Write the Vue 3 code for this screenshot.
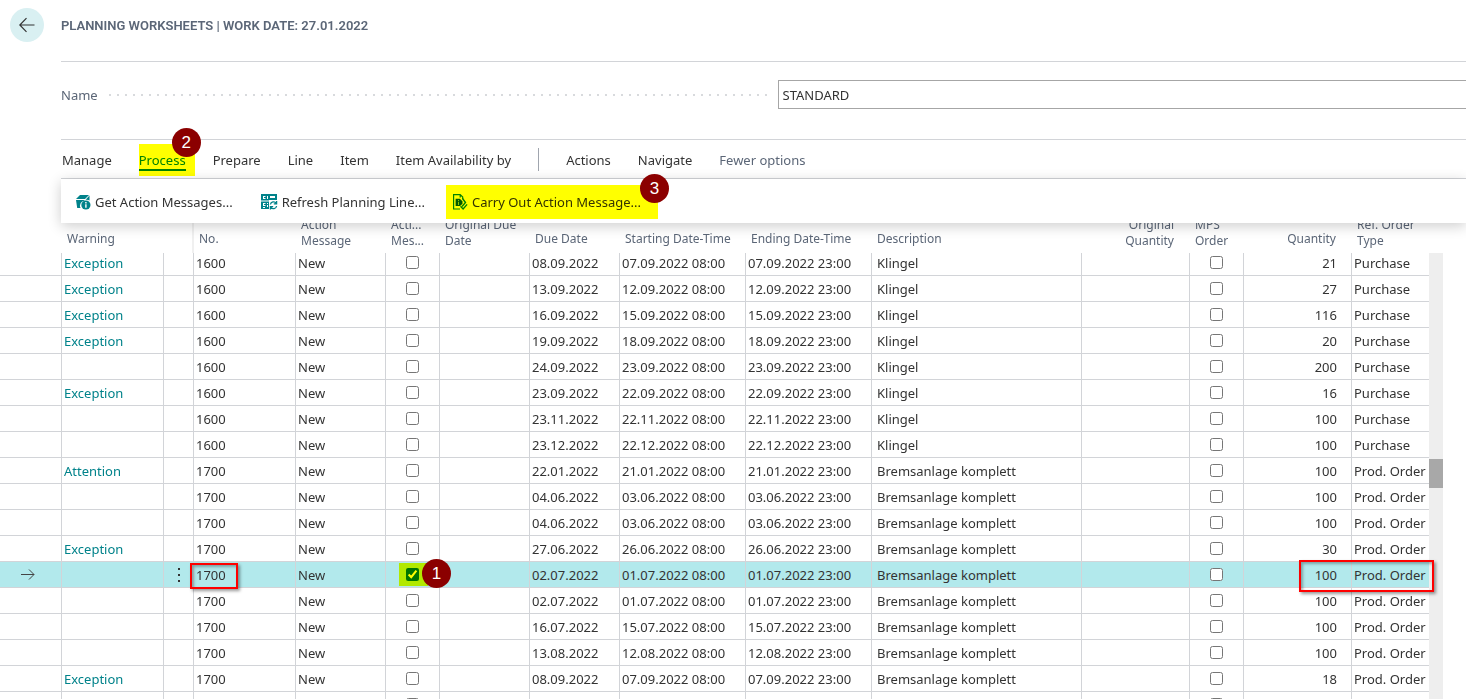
<script setup>
const columns = [
  { key: 'marker', label: [] },
  { key: 'warning', label: ['Warning'] },
  { key: 'more', label: [] },
  { key: 'no', label: ['No.'] },
  { key: 'message', label: ['Action', 'Message'] },
  { key: 'accept', label: ['Acti...', 'Mes...'] },
  { key: 'orig-due', label: ['Original Due', 'Date'] },
  { key: 'due', label: ['Due Date'] },
  { key: 'start', label: ['Starting Date-Time'] },
  { key: 'end', label: ['Ending Date-Time'] },
  { key: 'desc', label: ['Description'] },
  { key: 'orig-qty', label: ['Original', 'Quantity'] },
  { key: 'mps', label: ['MPS', 'Order'] },
  { key: 'qty', label: ['Quantity'] },
  { key: 'type', label: ['Ref. Order', 'Type'] },
]

const source = [
  ['Exception', '1600', '08.09.2022', '07.09.2022', 21],
  ['Exception', '1600', '13.09.2022', '12.09.2022', 27],
  ['Exception', '1600', '16.09.2022', '15.09.2022', 116],
  ['Exception', '1600', '19.09.2022', '18.09.2022', 20],
  ['', '1600', '24.09.2022', '23.09.2022', 200],
  ['Exception', '1600', '23.09.2022', '22.09.2022', 16],
  ['', '1600', '23.11.2022', '22.11.2022', 100],
  ['', '1600', '23.12.2022', '22.12.2022', 100],
  ['Attention', '1700', '22.01.2022', '21.01.2022', 100],
  ['', '1700', '04.06.2022', '03.06.2022', 100],
  ['', '1700', '04.06.2022', '03.06.2022', 100],
  ['Exception', '1700', '27.06.2022', '26.06.2022', 30],
  ['', '1700', '02.07.2022', '01.07.2022', 100, true],
  ['', '1700', '02.07.2022', '01.07.2022', 100],
  ['', '1700', '16.07.2022', '15.07.2022', 100],
  ['', '1700', '13.08.2022', '12.08.2022', 100],
  ['Exception', '1700', '08.09.2022', '07.09.2022', 18],
  [],
]

const rows = source.map(([warning, no, due, day, qty, selected]) => ({
  warning,
  no,
  message: no ? 'New' : '',
  due,
  start: day ? `${day} 08:00` : '',
  end: day ? `${day} 23:00` : '',
  desc: !no ? '' : no === '1600' ? 'Klingel' : 'Bremsanlage komplett',
  qty,
  type: !no ? '' : no === '1600' ? 'Purchase' : 'Prod. Order',
  selected: Boolean(selected),
}))
</script>

<template>
  <div class="page">
    <header class="title-bar">
      <button class="back" aria-label="Back">
        <svg width="16" height="16" viewBox="0 0 16 16" fill="none" stroke="#333" stroke-width="1.2">
          <path d="M15.500 8H.8M7.500 1.200L.8 8l6.700 6.800" />
        </svg>
      </button>
      <h1>PLANNING WORKSHEETS | WORK DATE: 27.01.2022</h1>
    </header>

    <main>
      <div class="name-field">
        <label for="batch-name">Name</label>
        <span class="leader"></span>
        <input id="batch-name" type="text" value="STANDARD" />
      </div>

      <section class="ribbon">
        <nav class="menu">
          <button>Manage</button>
          <button class="active">
            Process
            <span class="marker-pen"></span>
            <span class="badge">2</span>
          </button>
          <button>Prepare</button>
          <button>Line</button>
          <button>Item</button>
          <button>Item Availability by</button>
          <span class="divider"></span>
          <button>Actions</button>
          <button>Navigate</button>
          <button class="muted">Fewer options</button>
        </nav>

        <div class="panel">
          <button class="action">
            <svg width="16" height="16" viewBox="0 0 16 16">
              <path fill="#00828a" d="M1 5l4-4h9l-4 4zM1 6h8.500v.5A5.300 5.300 0 0 0 5.500 14H2.200zM10.800 5.400L14.500 1.600v4.800a6 6 0 0 0-3.700-.6z" />
              <circle cx="10.900" cy="11" r="4.600" fill="#00828a" />
              <path stroke="#fff" stroke-width="1.400" d="M10.900 8v1.400M10.900 10.200v3.600" />
            </svg>
            Get Action Messages...
          </button>
          <button class="action">
            <svg width="17" height="16" viewBox="0 0 17 16">
              <path fill="#00828a" d="M0 0h16v6H8v9H0z" />
              <path fill="#fff" d="M9 2h5v2H9zM0 6.500h8v1H0zM2 2h2.500v1H3v1h1.500v1H2zM6 2h1v3H6zM2 9h2.500v1H3v1h1.500v1H2zM6 9h1v1H6zM6 11h1v2H6zM2 13h2v1H2z" />
              <path fill="none" stroke="#00828a" stroke-width="1.300" d="M9.400 10.500a3.200 3.200 0 0 1 5.800-1.300M15.600 7v2.800h-2.800M15.600 12a3.200 3.200 0 0 1-5.800 1.300M9.400 15.500v-2.800h2.800" />
            </svg>
            Refresh Planning Line...
          </button>
          <button class="action carry">
            <svg width="15" height="16" viewBox="0 0 15 16">
              <path fill="none" stroke="#00828a" stroke-width="1.200" d="M7 15H.6V.6h6.600l2.500 2.500v2M7.200.6v3" />
              <path fill="#005a5f" d="M2.600 4.800h4.200L9.500 7.200v2.600L7 12H2.600z" />
              <path fill="none" stroke="#8ac6ca" d="M5.500 6v1.200M5.500 8v3" />
              <path fill="none" stroke="#00828a" stroke-width="1.400" d="M9.500 4.500l3 4-3.500 4M7.500 12.300l2.600 2.600 4-4.500" />
            </svg>
            Carry Out Action Message...
            <span class="marker-pen"></span>
            <span class="badge">3</span>
          </button>
        </div>
      </section>
    </main>

    <section class="grid">
      <table>
        <colgroup>
          <col v-for="c in columns" :key="c.key" :class="'w-' + c.key" />
        </colgroup>
        <thead>
          <tr>
            <th v-for="c in columns" :key="c.key" :class="['h-' + c.key, { single: c.label.length === 1 }]">
              <div v-for="line in c.label" :key="line">{{ line }}</div>
            </th>
          </tr>
        </thead>
        <tbody>
          <tr v-for="(r, i) in rows" :key="i" :class="{ selected: r.selected }">
            <td class="c-marker">
              <svg v-if="r.selected" width="14" height="12" viewBox="0 0 14 12" fill="none" stroke="#444">
                <path d="M0 5.500h13M8 .5l5 5-5 5" />
              </svg>
            </td>
            <td><a v-if="r.warning" href="#">{{ r.warning }}</a></td>
            <td class="c-more">
              <button v-if="r.selected" class="dots" aria-label="Row options">
                <svg width="2" height="14" viewBox="0 0 2 14" fill="#333">
                  <path d="M0 0h2v2H0zM0 6h2v2H0zM0 12h2v2H0z" />
                </svg>
              </button>
            </td>
            <td>{{ r.no }}<span v-if="r.selected" class="frame frame-no"></span></td>
            <td>{{ r.message }}</td>
            <td class="check">
              <input type="checkbox" :checked="r.selected" aria-label="Accept action message" />
              <template v-if="r.selected">
                <span class="marker-pen"></span>
                <span class="badge">1</span>
              </template>
            </td>
            <td></td>
            <td>{{ r.due }}</td>
            <td>{{ r.start }}</td>
            <td>{{ r.end }}</td>
            <td class="c-desc">{{ r.desc }}</td>
            <td></td>
            <td class="check"><input type="checkbox" aria-label="MPS order" /></td>
            <td class="c-qty">{{ r.qty }}</td>
            <td>{{ r.type }}<span v-if="r.selected" class="frame frame-type"></span></td>
          </tr>
        </tbody>
      </table>
      <div class="scrollbar"><div class="thumb"></div></div>
    </section>
  </div>
</template>

<style>
body {
  background: #fff;
}
</style>

<style scoped>
* {
  box-sizing: border-box;
}
.page {
  height: 100vh;
  overflow: hidden;
  font-family: "Noto Sans", sans-serif;
  font-size: 13px;
  line-height: 18px;
  color: #333;
}
button {
  font: inherit;
  color: inherit;
  background: none;
  border: 0;
  padding: 0;
  white-space: nowrap;
}
.title-bar {
  display: flex;
  align-items: center;
  gap: 17px;
  height: 61px;
  padding: 0 0 11px 10px;
}
.back {
  display: flex;
  align-items: center;
  justify-content: center;
  width: 34px;
  height: 34px;
  border-radius: 50%;
  background: #d9f0f2;
}
h1 {
  margin: 2px 0 0;
  font-family: Roboto, sans-serif;
  font-size: 13px;
  font-weight: 600;
  color: #5b6677;
}
main {
  margin-left: 61px;
  border-top: 1px solid #d2d4d8;
}
.name-field {
  display: flex;
  align-items: center;
  height: 77px;
  padding-bottom: 12px;
  color: #5b6677;
}
.name-field label {
  width: 48px;
}
.leader {
  flex: 1;
  height: 2px;
  margin-right: 10px;
  background: repeating-linear-gradient(to right, #d8dadd 0 2px, transparent 2px 8px);
}
.name-field input {
  width: 49%;
  height: 29px;
  padding: 0 4px;
  border: 1px solid #a6a6a6;
  border-right: 0;
  font: inherit;
  color: #333;
}
.ribbon {
  position: relative;
  z-index: 2;
  border-top: 1px solid #d2d4d8;
}
.menu {
  display: flex;
  align-items: center;
  gap: 27px;
  height: 39px;
  padding-left: 1px;
  border-bottom: 1px solid #d2d4d8;
}
.menu button {
  position: relative;
  height: 24px;
  padding-top: 2px;
}
.menu .active {
  color: #00828a;
  box-shadow: inset 0 -2px #00828a;
}
.menu .muted {
  color: #5b6677;
}
.divider {
  width: 1px;
  height: 23px;
  background: #a0a5ae;
}
.panel {
  position: absolute;
  top: 100%;
  left: 0;
  right: 0;
  display: flex;
  align-items: center;
  gap: 28px;
  height: 44px;
  padding: 2px 0 0 14px;
  background: #fff;
  box-shadow: 0 3px 14px rgba(0, 0, 0, 0.2);
}
.action {
  position: relative;
  display: flex;
  align-items: center;
  gap: 4px;
  height: 34px;
}
.action svg {
  margin-bottom: 1px;
}
.marker-pen {
  position: absolute;
  background: #ff0;
  mix-blend-mode: multiply;
}
.active .marker-pen {
  inset: -3px -9px -5px 0;
}
.carry .marker-pen {
  inset: 0 -17px 0 -7px;
}
.check .marker-pen {
  inset: 1px 11px 1px 13px;
}
.badge {
  position: absolute;
  width: 29px;
  height: 29px;
  border-radius: 50%;
  background: #8b0000;
  color: #fff;
  font: 17px/29px "Liberation Sans", sans-serif;
  text-align: center;
}
.active .badge {
  top: -19px;
  right: -15px;
}
.carry .badge {
  top: -11px;
  right: -28px;
}
.check .badge {
  top: -3px;
  right: -12px;
  z-index: 1;
}
.grid {
  display: flex;
  padding-right: 23px;
}
table {
  flex: 1;
  width: 100%;
  table-layout: fixed;
  border-collapse: separate;
  border-spacing: 0;
}
.w-marker { width: 62px; }
.w-warning, .w-no { width: 102px; }
.w-more { width: 30px; }
.w-message, .w-orig-due, .w-due { width: 90px; }
.w-accept, .w-mps { width: 54px; }
.w-start, .w-end { width: 126px; }
.w-orig-qty, .w-qty { width: 108px; }
.w-type { width: 77px; }
th {
  height: 74px;
  padding: 0 5px 4px;
  vertical-align: bottom;
  text-align: left;
  font-size: 12px;
  line-height: 16px;
  font-weight: 400;
  color: #5b6677;
  white-space: nowrap;
}
th.single {
  padding-bottom: 6px;
}
.h-more {
  border-right: 2px solid #f0f0f0;
}
.h-orig-qty, .h-qty {
  text-align: right;
  padding-right: 16px;
}
td {
  position: relative;
  height: 26px;
  padding: 0 2px;
  border-right: 1px solid #d2d4d8;
  border-bottom: 1px solid #d2d4d8;
  white-space: nowrap;
}
td:last-child {
  border-right: 0;
}
tbody tr:first-child td {
  height: 23px;
  padding-bottom: 3px;
}
a {
  color: #00828a;
  text-decoration: none;
}
.selected td {
  background: #b2e9ec;
}
td.c-desc {
  padding-left: 5px;
}
td.c-qty {
  text-align: right;
  padding-right: 14px;
}
.c-marker svg {
  display: block;
  margin-left: 19px;
}
.dots {
  display: block;
  margin-left: 12px;
  height: 14px;
}
.dots svg {
  display: block;
}
.check input {
  display: block;
  width: 13px;
  height: 13px;
  margin: 0 auto;
  accent-color: #00757d;
}
.frame {
  position: absolute;
  z-index: 1;
  border: 2px solid #f00;
  box-shadow: 2px 2px 3px rgba(0, 0, 0, 0.4), inset 2px 2px 3px rgba(0, 0, 0, 0.3);
}
.frame-no {
  inset: 1px 57px -2px -4px;
}
.frame-type {
  inset: -2px -5px -5px -53px;
}
.scrollbar {
  width: 14px;
  margin-top: 74px;
  padding-top: 206px;
  background: #eee;
}
.thumb {
  height: 29px;
  background: #a8a8a8;
}
</style>
